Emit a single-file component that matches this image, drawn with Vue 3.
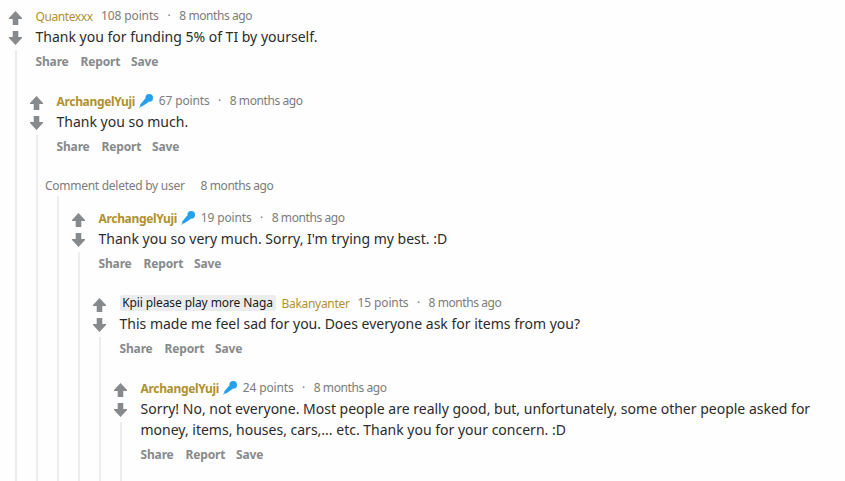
<template>
  <div class="thread">
    <div v-for="c in comments" :key="c.id" class="row" :class="{ last: c.id === comments.length }">
      <div v-for="n in c.depth" :key="n" class="rail"><i class="line" /></div>

      <div v-if="c.deleted" class="deleted">
        <div class="deleted-text">
          <span class="deleted-label">Comment deleted by user</span>
          <span class="ago">8 months ago</span>
        </div>
        <div class="rail"><i class="line" /></div>
      </div>

      <template v-else>
        <div class="rail votes">
          <svg class="arrow" viewBox="0 0 13 14"><path d="M6.5 0 13 7v1H9.3v6H3.7V8H0V7z" /></svg>
          <svg class="arrow down" viewBox="0 0 13 14"><path d="M6.5 14 13 7V6H9.3V0H3.7v6H0v1z" /></svg>
          <i class="line" />
        </div>
        <div class="body">
          <div class="meta">
            <span v-if="c.flair" class="flair">{{ c.flair }}</span>
            <span class="author" :class="[c.cls, { op: c.op }]">{{ c.author }}</span>
            <svg v-if="c.op" class="mic" viewBox="0 0 14 14">
              <circle cx="10.2" cy="3.9" r="3.8" />
              <path d="M6.2 4.4 9.7 7.9 3 12.6 1.8 12.5.6 13.7.1 13.2 1.2 12 1.1 10.8z" />
            </svg>
            <span class="points">{{ c.points }} points</span>
            <span class="dot">·</span>
            <span class="ago">8 months ago</span>
          </div>
          <p class="text"><span v-for="t in c.text" :key="t">{{ t }}</span></p>
          <div class="actions">
            <button type="button" class="share">Share</button>
            <button type="button" class="report">Report</button>
            <button type="button" class="save">Save</button>
          </div>
        </div>
      </template>
    </div>
  </div>
</template>

<script setup>
const comments = [
  { id: 1, depth: 0, author: 'Quantexxx', cls: 'quant', points: 108, text: ['Thank you for funding 5% of TI by yourself.'] },
  { id: 2, depth: 1, author: 'ArchangelYuji', op: true, points: 67, text: ['Thank you so much.'] },
  { id: 3, depth: 2, deleted: true },
  { id: 4, depth: 3, author: 'ArchangelYuji', op: true, points: 19, text: ["Thank you so very much. Sorry, I'm trying my best. :D"] },
  { id: 5, depth: 4, author: 'Bakanyanter', cls: 'bakan', flair: 'Kpii please play more Naga', points: 15, text: ['This made me feel sad for you. Does everyone ask for items from you?'] },
  {
    id: 6,
    depth: 5,
    author: 'ArchangelYuji',
    op: true,
    points: 24,
    text: [
      'Sorry! No, not everyone. Most people are really good, but, unfortunately, some other people asked for',
      'money, items, houses, cars,... etc. Thank you for your concern. :D'
    ]
  }
]
</script>

<style>
body { background: #fefefe; }
</style>

<style scoped>
.thread { height: 481px; padding-left: 5px; overflow: hidden; box-sizing: border-box; display: flex; flex-direction: column; font-family: "Noto Sans", sans-serif; font-size: 12px; line-height: 16px; color: #7c7c7c; }
.row { display: flex; flex: none; }
.row.last { flex: 1; }
.rail { width: 21px; flex: none; display: flex; flex-direction: column; }
.line { width: 2px; flex: 1; margin-left: 10px; background: #ededed; }
.votes { padding-top: 10.7px; }
.arrow { display: block; width: 13px; height: 14px; margin-left: 4px; fill: #878a8c; }
.arrow.down { margin: 6.5px 0 4.8px 4px; }
.body { padding: 8px 0 0 9.5px; height: 77px; white-space: nowrap; }
.meta { display: flex; height: 16px; align-items: center; }
.flair { width: 156px; height: 16px; flex: none; margin-right: 6px; border-radius: 2px; background: #ebecee; color: #1a1a1b; text-align: center; letter-spacing: -.1px; }
.author { color: #b0912d; position: relative; top: 1px; }
.author.op { width: 82px; font-weight: 700; letter-spacing: -.33px; }
.quant { width: 57.5px; letter-spacing: -.42px; }
.bakan { width: 68px; letter-spacing: -.3px; }
.mic { width: 14px; height: 14px; fill: #24a0ed; margin-right: -1.8px; }
.points { margin-left: 8px; letter-spacing: -.12px; }
.dot { width: 20.5px; text-align: center; }
.op ~ .dot, .bakan ~ .dot { width: 20px; }
.ago { letter-spacing: -.42px; }
.text { margin: 2px 0 0; font-size: 14px; line-height: 21px; color: #2b2b2c; }
.text span { display: block; }
.actions { display: flex; margin-top: 7px; gap: 12px; }
.actions button { border: 0; padding: 0; background: none; font: 700 12px/16px "Noto Sans", sans-serif; color: #878a8c; text-align: left; letter-spacing: -.15px; }
.share { width: 33px; }
.report { width: 38px; }
.save { margin-left: .5px; }
.deleted { height: 32px; display: flex; flex-direction: column; }
.deleted-text { display: flex; height: 26px; padding-top: 8px; margin-left: -2px; box-sizing: border-box; gap: 16px; white-space: nowrap; }
.deleted-label { letter-spacing: -.27px; }
.deleted > .rail { flex: 1; }
</style>
